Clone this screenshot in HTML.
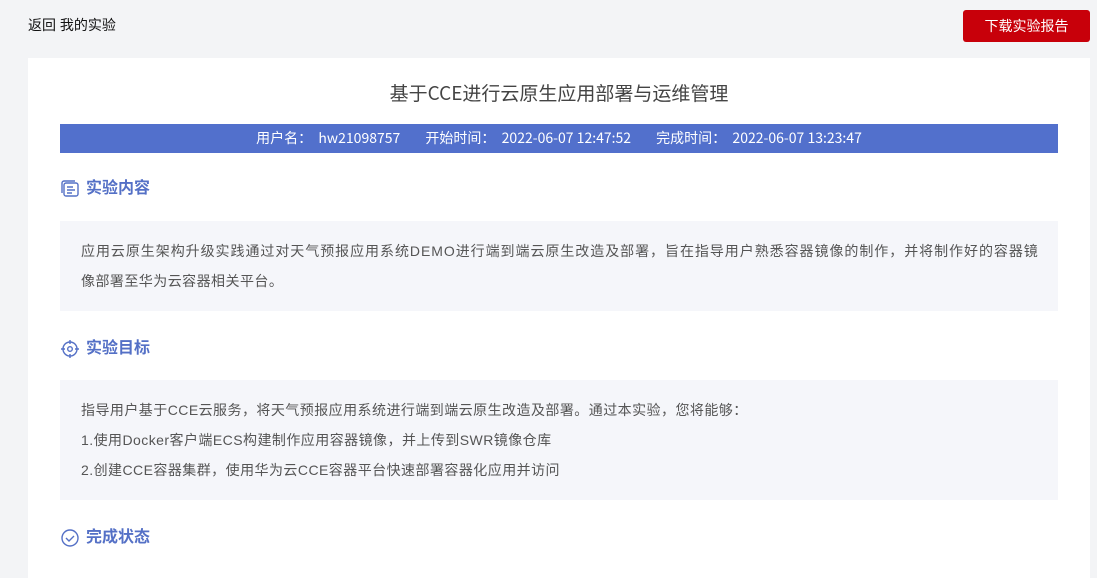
<!DOCTYPE html>
<html><head><meta charset="utf-8"><style>
*{margin:0;padding:0;box-sizing:border-box}
body{width:1097px;height:558px;overflow:hidden;background:#f3f4f6;font-family:"Liberation Sans","Noto Sans CJK SC",sans-serif;position:relative}
.back{position:absolute;left:28px;top:15px;font-size:14px;line-height:20px;color:#111}
.btn{position:absolute;left:963px;top:10px;width:127px;height:32px;background:#c8000a;border-radius:3px;color:#fff;font-size:14px;text-align:center;line-height:32px}
.card{position:absolute;left:28px;top:58px;width:1062px;height:520px;background:#fff}
.title{position:absolute;left:0;width:1062px;top:22px;line-height:26px;text-align:center;font-size:19px;color:#444;font-family:"Noto Sans CJK SC",sans-serif}
.bar{position:absolute;left:32px;top:66px;width:998px;height:29px;background:#5270cc;color:#fff;font-size:14px;text-align:center;line-height:29px;white-space:pre;font-family:"Noto Sans CJK SC",sans-serif}
.h{position:absolute;left:32px;font-size:16px;line-height:20px;font-weight:bold;color:#5470c6;display:flex;align-items:center}
.h svg{margin-right:6px}
.box{position:absolute;left:32px;width:998px;background:#f5f6fa;font-size:14px;color:#555;padding:0 0 0 21px;line-height:30px;letter-spacing:0.45px;white-space:nowrap}
</style></head><body>
<div class="back">返回 我的实验</div>
<div class="btn">下载实验报告</div>
<div class="card">
<div class="title">基于CCE进行云原生应用部署与运维管理</div>
<div class="bar">用户名：  hw21098757        开始时间：  2022-06-07 12:47:52        完成时间：  2022-06-07 13:23:47</div>
<div class="h" style="top:121px"><svg width="20" height="20" viewBox="0 0 20 20" fill="none" stroke="#5470c6" stroke-width="1.4"><rect x="4" y="4" width="14" height="13" rx="2"/><path d="M2 14V4a2 2 0 0 1 2-2h11"/><path d="M7 8h6M7 11h8M7 14h5"/></svg>实验内容</div>
<div class="box" style="top:163px;height:90px;padding-top:15px"><span style="letter-spacing:0.95px">应用云原生架构升级实践通过对天气预报应用系统DEMO进行端到端云原生改造及部署，旨在指导用户熟悉容器镜像的制作，并将制作好的容器镜</span><br>像部署至华为云容器相关平台。</div>
<div class="h" style="top:281px"><svg width="20" height="20" viewBox="0 0 20 20" fill="none" stroke="#5470c6" stroke-width="1.4"><circle cx="10" cy="10" r="7"/><circle cx="10" cy="10" r="2.3"/><path d="M10 1v4M10 15v4M1 10h4M15 10h4"/></svg>实验目标</div>
<div class="box" style="top:322px;height:120px;padding-top:15px">指导用户基于CCE云服务，将天气预报应用系统进行端到端云原生改造及部署。通过本实验，您将能够：<br>1.使用Docker客户端ECS构建制作应用容器镜像，并上传到SWR镜像仓库<br>2.创建CCE容器集群，使用华为云CCE容器平台快速部署容器化应用并访问</div>
<div class="h" style="top:470px"><svg width="20" height="20" viewBox="0 0 20 20" fill="none" stroke="#5470c6" stroke-width="1.4"><circle cx="10" cy="10" r="8"/><path d="M6 10l3 3 5-5"/></svg>完成状态</div>
</div>
</body></html>
